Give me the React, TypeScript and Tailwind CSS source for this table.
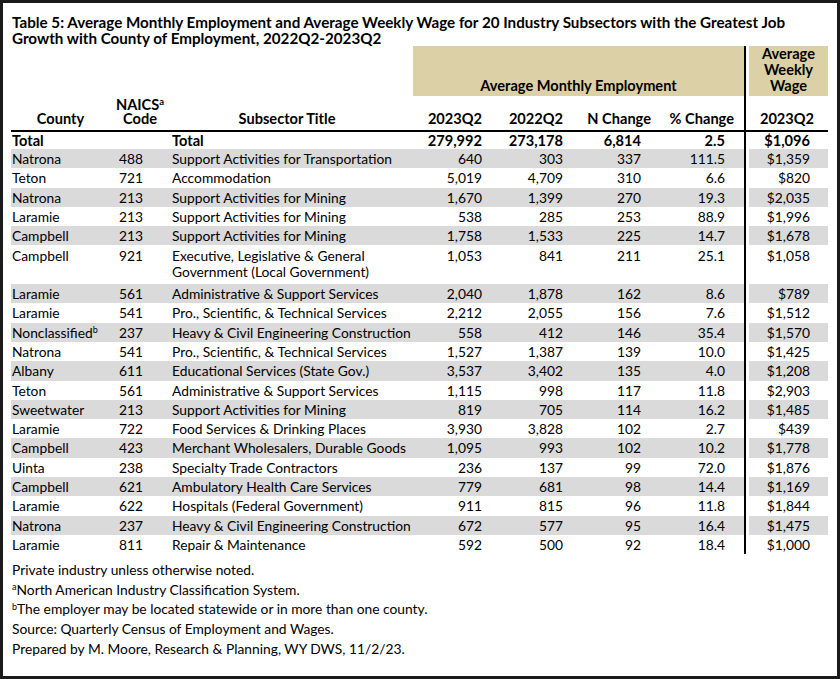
import React from 'react'

type Row = {
  county: string
  sup?: string
  code: string
  title: string[]
  e23: string
  e22: string
  n: string
  pct: string
  wage: string
}

const rows: Row[] = [
  { county: 'Natrona', code: '488', title: ['Support Activities for Transportation'], e23: '640', e22: '303', n: '337', pct: '111.5', wage: '$1,359' },
  { county: 'Teton', code: '721', title: ['Accommodation'], e23: '5,019', e22: '4,709', n: '310', pct: '6.6', wage: '$820' },
  { county: 'Natrona', code: '213', title: ['Support Activities for Mining'], e23: '1,670', e22: '1,399', n: '270', pct: '19.3', wage: '$2,035' },
  { county: 'Laramie', code: '213', title: ['Support Activities for Mining'], e23: '538', e22: '285', n: '253', pct: '88.9', wage: '$1,996' },
  { county: 'Campbell', code: '213', title: ['Support Activities for Mining'], e23: '1,758', e22: '1,533', n: '225', pct: '14.7', wage: '$1,678' },
  { county: 'Campbell', code: '921', title: ['Executive, Legislative & General', 'Government (Local Government)'], e23: '1,053', e22: '841', n: '211', pct: '25.1', wage: '$1,058' },
  { county: 'Laramie', code: '561', title: ['Administrative & Support Services'], e23: '2,040', e22: '1,878', n: '162', pct: '8.6', wage: '$789' },
  { county: 'Laramie', code: '541', title: ['Pro., Scientific, & Technical Services'], e23: '2,212', e22: '2,055', n: '156', pct: '7.6', wage: '$1,512' },
  { county: 'Nonclassified', sup: 'b', code: '237', title: ['Heavy & Civil Engineering Construction'], e23: '558', e22: '412', n: '146', pct: '35.4', wage: '$1,570' },
  { county: 'Natrona', code: '541', title: ['Pro., Scientific, & Technical Services'], e23: '1,527', e22: '1,387', n: '139', pct: '10.0', wage: '$1,425' },
  { county: 'Albany', code: '611', title: ['Educational Services (State Gov.)'], e23: '3,537', e22: '3,402', n: '135', pct: '4.0', wage: '$1,208' },
  { county: 'Teton', code: '561', title: ['Administrative & Support Services'], e23: '1,115', e22: '998', n: '117', pct: '11.8', wage: '$2,903' },
  { county: 'Sweetwater', code: '213', title: ['Support Activities for Mining'], e23: '819', e22: '705', n: '114', pct: '16.2', wage: '$1,485' },
  { county: 'Laramie', code: '722', title: ['Food Services & Drinking Places'], e23: '3,930', e22: '3,828', n: '102', pct: '2.7', wage: '$439' },
  { county: 'Campbell', code: '423', title: ['Merchant Wholesalers, Durable Goods'], e23: '1,095', e22: '993', n: '102', pct: '10.2', wage: '$1,778' },
  { county: 'Uinta', code: '238', title: ['Specialty Trade Contractors'], e23: '236', e22: '137', n: '99', pct: '72.0', wage: '$1,876' },
  { county: 'Campbell', code: '621', title: ['Ambulatory Health Care Services'], e23: '779', e22: '681', n: '98', pct: '14.4', wage: '$1,169' },
  { county: 'Laramie', code: '622', title: ['Hospitals (Federal Government)'], e23: '911', e22: '815', n: '96', pct: '11.8', wage: '$1,844' },
  { county: 'Natrona', code: '237', title: ['Heavy & Civil Engineering Construction'], e23: '672', e22: '577', n: '95', pct: '16.4', wage: '$1,475' },
  { county: 'Laramie', code: '811', title: ['Repair & Maintenance'], e23: '592', e22: '500', n: '92', pct: '18.4', wage: '$1,000' },
]

function Divider() {
  return (
    <>
      <div className="w-[2px] shrink-0 bg-black" />
      <div className="w-[3px] shrink-0" />
    </>
  )
}

function DataRow({ r, shade }: { r: Row; shade: boolean }) {
  const bg = shade ? 'bg-[#dadada]' : 'bg-white'
  const tall = r.title.length > 1
  const cell = tall ? 'pt-[3px] leading-[15.5px] h-[38.6px]' : 'leading-[19.3px] h-[19.3px]'
  return (
    <div className="flex">
      <div className={`flex w-[733px] ${bg} ${cell}`}>
        <div className="w-[99px] pl-[1px]">
          {r.county}
          {r.sup && <sup className="text-[9px]">{r.sup}</sup>}
        </div>
        <div className="w-[60px] pr-[27px] text-right">{r.code}</div>
        <div className="w-[243px] pl-[2px] whitespace-nowrap">
          {r.title.map((t) => (
            <div key={t}>{t}</div>
          ))}
        </div>
        <div className="w-[72px] pr-[3px] text-right">{r.e23}</div>
        <div className="w-[82px] pr-[4px] text-right">{r.e22}</div>
        <div className="w-[84px] pr-[10px] text-right">{r.n}</div>
        <div className="w-[93px] pr-[19px] text-right">{r.pct}</div>
      </div>
      <Divider />
      <div className={`w-[79px] pr-[18px] text-right ${bg} ${cell}`}>{r.wage}</div>
    </div>
  )
}

export default function App() {
  return (
    <div className="w-[840px] h-[679px] overflow-hidden border-[3px] border-[#1b1b1b] bg-white font-['Lato',sans-serif] text-[13.8px] text-black">
      <div className="px-[8px] pt-[11px]">
        <h1 className="whitespace-nowrap pl-[1px] text-[15.2px] font-bold leading-[16px]">
          Table 5: Average Monthly Employment and Average Weekly Wage for 20 Industry Subsectors with the Greatest Job
          <br />
          Growth with County of Employment, 2022Q2-2023Q2
        </h1>

        <div className="w-[817px]">
          {/* tan group headers */}
          <div className="flex h-[50px] text-[14.6px] font-bold">
            <div className="w-[402px]" />
            <div className="flex w-[331px] items-end justify-center bg-[#dcd0a7] pb-[2px] leading-[16px]">
              Average Monthly Employment
            </div>
            <Divider />
            <div className="flex w-[79px] flex-col items-center justify-end bg-[#dcd0a7] pb-[2px] text-center leading-[16px]">
              <div>Average</div>
              <div>Weekly</div>
              <div>Wage</div>
            </div>
          </div>

          {/* column labels */}
          <div className="flex h-[34px] text-[14.6px] font-bold leading-[14px]">
            <div className="flex w-[733px] items-end pb-[4px]">
              <div className="w-[99px] text-center">County</div>
              <div className="w-[60px] text-center">
                <div>
                  NAICS<sup className="text-[9.5px]">a</sup>
                </div>
                <div>Code</div>
              </div>
              <div className="w-[243px] pr-[9px] text-center">Subsector Title</div>
              <div className="w-[72px] pr-[3px] text-right">2023Q2</div>
              <div className="w-[82px] pr-[4px] text-right">2022Q2</div>
              <div className="w-[84px] text-right">N Change</div>
              <div className="w-[93px] pr-[10px] text-right">% Change</div>
            </div>
            <Divider />
            <div className="flex w-[79px] items-end justify-center pb-[4px] pr-[3px]">2023Q2</div>
          </div>

          <div className="h-[2px] bg-black" />

          {/* total */}
          <div className="flex h-[17px] text-[14.6px] font-bold leading-[17px]">
            <div className="flex w-[733px]">
              <div className="w-[99px] pl-[1px]">Total</div>
              <div className="w-[60px]" />
              <div className="w-[243px] pl-[2px]">Total</div>
              <div className="w-[72px] pr-[3px] text-right">279,992</div>
              <div className="w-[82px] pr-[4px] text-right">273,178</div>
              <div className="w-[84px] pr-[10px] text-right">6,814</div>
              <div className="w-[93px] pr-[19px] text-right">2.5</div>
            </div>
            <Divider />
            <div className="w-[79px] pr-[18px] text-right">$1,096</div>
          </div>

          {rows.map((r, i) => (
            <DataRow key={r.county + r.code} r={r} shade={i % 2 === 0} />
          ))}
        </div>

        <div className="mt-[6px] pl-[1px] leading-[19.6px]">
          <p>Private industry unless otherwise noted.</p>
          <p>
            <sup className="text-[9px]">a</sup>North American Industry Classification System.
          </p>
          <p>
            <sup className="text-[9px]">b</sup>The employer may be located statewide or in more than one county.
          </p>
          <p>Source: Quarterly Census of Employment and Wages.</p>
          <p>Prepared by M. Moore, Research &amp; Planning, WY DWS, 11/2/23.</p>
        </div>
      </div>
    </div>
  )
}
